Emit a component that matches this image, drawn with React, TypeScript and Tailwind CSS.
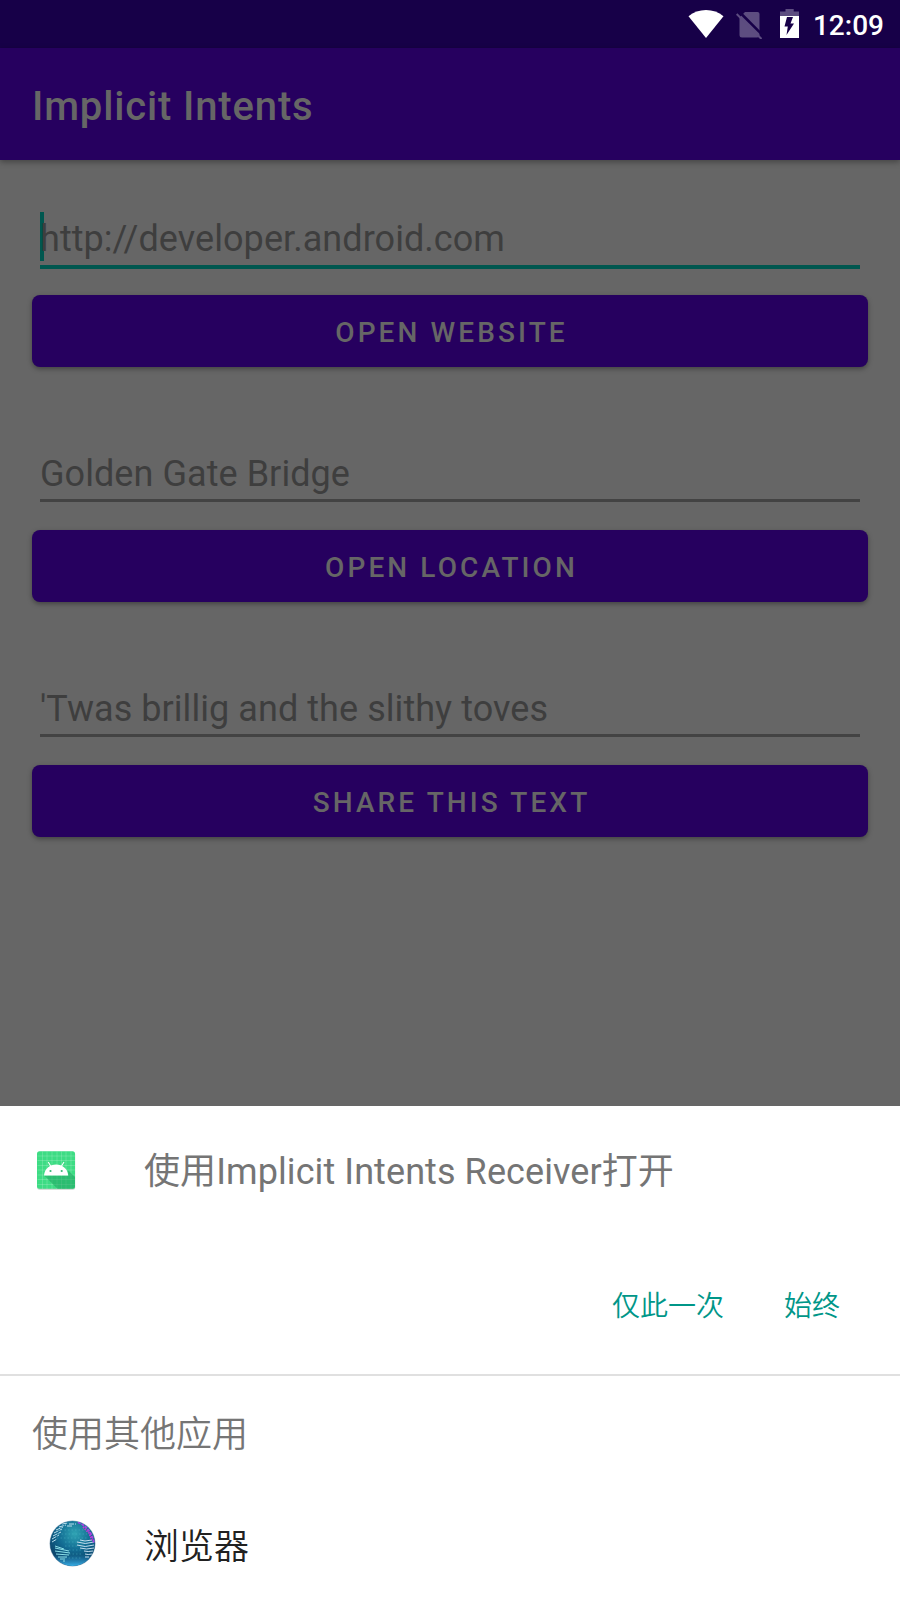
const fields = [
  { hint: 'http://developer.android.com', action: 'OPEN WEBSITE', focused: true },
  { hint: 'Golden Gate Bridge', action: 'OPEN LOCATION', focused: false },
  { hint: "'Twas brillig and the slithy toves", action: 'SHARE THIS TEXT', focused: false },
];

function StatusBar() {
  return (
    <div className="flex h-12 shrink-0 items-center bg-[#170048] pr-4 text-white">
      <svg className="ml-auto h-7 w-9" viewBox="0 0 36 28">
        <path d="M.5 6.2C10-2 26-2 35.500 6.200L18 28Z" fill="#fff" />
      </svg>
      <svg className="ml-3 mt-0.5 h-7 w-[26px]" viewBox="0 0 26 28">
        <path d="M9 1H21.500Q23.500 1 23.500 3V24Q23.500 26.500 21 26.500H6Q3.500 26.500 3.500 24V6.500Z" fill="#5d4d80" />
        <path d="M3.500 1L27 24.500" stroke="#170048" strokeWidth="2.600" />
        <path d="M.7 3L25.500 28" stroke="#5d4d80" strokeWidth="2" />
      </svg>
      <svg className="ml-[18px] mb-px h-[29px] w-[19px]" viewBox="0 0 19 29">
        <path d="M5.500 0H13.700V2.500H19V7H0V2.500H5.500Z" fill="#5d4d80" />
        <path d="M0 7H19V29H0Z" fill="#fff" />
        <path d="M7 8H13L10.500 14.500H14L6.500 26L7.800 17.500H4.500Z" fill="#170048" />
      </svg>
      <span className="ml-[14px] mt-1 text-[28px] leading-8 font-medium">12:09</span>
    </div>
  );
}

function AndroidIcon() {
  return (
    <svg className="size-[39px]" viewBox="0 0 39 39">
      <rect x=".2" y="1.300" width="38" height="37.500" rx="2.500" fill="#c9d2cc" />
      <rect x="0" y=".3" width="38" height="37.500" rx="2.500" fill="#3ddc84" />
      <path d="M5.500 .5V38M10 .5V38M15 .5V38M20 .5V38M24.500 .5V38M29 .5V38M34 .5V38M.5 5H38M.5 9.500H38M.5 14.500H38M.5 19H38M.5 24H38M.5 28.500H38M.5 33.500H38" stroke="#fff" strokeOpacity=".25" strokeWidth=".7" />
      <path d="M7.200 24.500L20.500 37.800H35.500Q38 37.800 38 35.500V26L31.200 19.500V24.500Z" fill="#1a9e5b" fillOpacity=".5" />
      <path d="M7 24.500C7.700 17.500 12.700 13.500 19.100 13.500S30.500 17.500 31.200 24.500Z" fill="#fff" />
      <path d="M13.700 15L11.200 11M24.500 15L27 11" stroke="#fff" strokeWidth="1.100" />
      <circle cx="13.500" cy="20" r="1.100" fill="#3ab878" />
      <circle cx="24.700" cy="20" r="1.100" fill="#3ab878" />
    </svg>
  );
}

function GlobeIcon() {
  return (
    <svg className="mb-0.5 size-[47px]" viewBox="0 0 47 47">
      <defs>
        <radialGradient id="sea" cx=".55" cy=".28" r=".72">
          <stop offset="0" stopColor="#2fa3b3" />
          <stop offset=".5" stopColor="#126c93" />
          <stop offset="1" stopColor="#0a3b62" />
        </radialGradient>
        <linearGradient id="glow" x1="0" y1="0" x2="0" y2="1">
          <stop offset=".75" stopColor="#2e9fd8" stopOpacity="0" />
          <stop offset="1" stopColor="#38b0e8" />
        </linearGradient>
        <clipPath id="ball"><circle cx="23.500" cy="23.500" r="22.500" /></clipPath>
      </defs>
      <circle cx="23.500" cy="23.500" r="23" fill="#9bb2c4" />
      <circle cx="23.500" cy="23.500" r="22.500" fill="url(#sea)" />
      <circle cx="23.500" cy="23.500" r="22.500" fill="url(#glow)" />
      <g clipPath="url(#ball)" fill="none">
        <path d="M12 10H36M9 14H38M8 18H38M16 22H30M16 26H30M20 30H34M20 34H34M16 38H32" stroke="#58c1d0" strokeOpacity=".5" strokeDasharray="1.500 2" strokeWidth=".8" />
        <path d="M13 4L19 3M10 7L17 5M7 10L14 7M5 13L13 9M4 16L12 12M3 19L10 15M3 22L8 19M18 6H24M20 4H27" stroke="#b9dfed" strokeWidth="1" strokeDasharray="5 1" />
        <path d="M6 26L15 29M6 28L20 31M6 31L21 33M7 34L20 35M9 37L18 37M11 39L16 39M14 41L16 41" stroke="#8ce0e8" strokeWidth="1" />
        <path d="M31 20Q35 22 43 20M28 22Q36 25 45 22M28 25Q36 28 45 25M31 28Q37 30 45 28M35 31Q39 32 44 31M36 34Q39 35 43 34M36 37L40 37" stroke="#c4deee" strokeWidth="1" />
        <path d="M29 2Q42 8 45 23" stroke="#a044e0" strokeWidth="2" strokeDasharray="3 1" />
        <path d="M34 7L40 13L43 20" stroke="#c536d7" strokeWidth="1.800" strokeDasharray="1.500 1" />
      </g>
    </svg>
  );
}

export default function App() {
  return (
    <div className="flex h-[1600px] w-[900px] flex-col overflow-hidden bg-[#666666] font-['Roboto','Noto_Sans_CJK_SC',sans-serif]">
      <StatusBar />
      <header className="flex h-28 shrink-0 items-center bg-[#26005f] px-8 pt-1.5 text-[40px] font-medium tracking-[0.85px] text-[#666666] shadow-[0_2px_6px_rgba(0,0,0,0.35)]">
        <h1>Implicit Intents</h1>
      </header>
      <main className="flex h-[946px] shrink-0 flex-col gap-[73px] px-8 pt-[45px]">
        {fields.map(({ hint, action, focused }) => (
          <section key={action} className="flex h-[162px] shrink-0 flex-col">
            <div
              className={
                focused
                  ? 'relative mx-2 h-16 border-b-4 border-[#00574f] pt-2.5 text-[36px] leading-[49px] tracking-[0.06px] text-[#3e3e3e]'
                  : 'relative mx-2 h-[62px] border-b-[3px] border-[#434343] pt-2.5 text-[36px] leading-[49px] tracking-[0.06px] text-[#3e3e3e]'
              }
            >
              {focused && <span className="absolute top-[7px] left-0 h-[49px] w-1 bg-[#00574f]" />}
              <span className="relative">{hint}</span>
            </div>
            <button className="mt-auto h-[72px] w-full rounded-lg bg-[#26005f] pt-1 pl-[3px] text-[28px] font-medium tracking-[3.1px] text-[#666666] shadow-[0_2px_5px_rgba(0,0,0,0.35)]">
              {action}
            </button>
          </section>
        ))}
      </main>
      <section className="flex flex-1 flex-col bg-white text-[36px] text-[#757575]">
        <div className="flex h-32 items-center pl-[37px]">
          <AndroidIcon />
          <span className="ml-[68px] pt-1 tracking-[0.08px]">使用Implicit Intents Receiver打开</span>
        </div>
        <div className="flex h-[140px] items-center justify-end gap-[60px] pt-[5px] pr-[60px] text-[28px] font-[350] text-[#009688]">
          <button>仅此一次</button>
          <button>始终</button>
        </div>
        <div className="h-0.5 bg-[#e0e0e0]" />
        <h2 className="flex h-[112px] items-center px-8 pt-1.5 font-[350]">使用其他应用</h2>
        <div className="flex h-28 items-center pl-[49px] text-[#212121]">
          <GlobeIcon />
          <span className="ml-12 pt-2 text-[35px] font-[350]">浏览器</span>
        </div>
      </section>
    </div>
  );
}
